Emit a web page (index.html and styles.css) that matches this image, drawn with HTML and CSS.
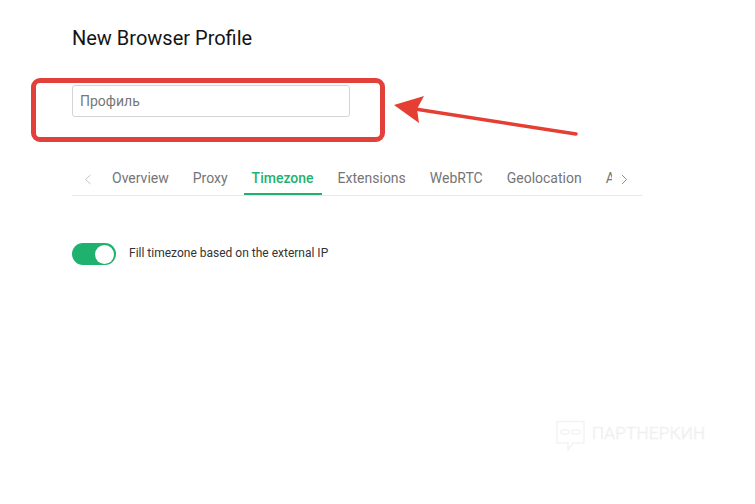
FILE: index.html
```html
<!DOCTYPE html>
<html lang="en">
<head>
<meta charset="utf-8">
<title>New Browser Profile</title>
<link rel="stylesheet" href="styles.css">
</head>
<body>
<main class="page">
  <h1 class="title">New Browser Profile</h1>
  <input class="name-input" type="text" placeholder="Профиль">
  <nav class="tabs">
    <svg class="chev" width="32" height="14" viewBox="0 0 32 14"><path d="M18.500 3 L13.500 7.500 L18.500 12" fill="none" stroke="#c4c4c4" stroke-width="1"/></svg>
    <div class="tab-view">
      <span class="tab">Overview</span>
      <span class="tab">Proxy</span>
      <span class="tab active">Timezone</span>
      <span class="tab">Extensions</span>
      <span class="tab">WebRTC</span>
      <span class="tab">Geolocation</span>
      <span class="tab">Advanced</span>
    </div>
    <svg class="chev" width="30" height="14" viewBox="0 0 30 14"><path d="M10 3 L14.500 7.500 L10 12" fill="none" stroke="#8c8c8c" stroke-width="1"/></svg>
  </nav>
  <div class="toggle-row">
    <span class="toggle"><span class="knob"></span></span>
    <span class="toggle-label">Fill timezone based on the external IP</span>
  </div>
</main>
<div class="frame"></div>
<svg class="arrow" width="200" height="50" viewBox="390 90 200 50">
  <path d="M576 134 L415 109" fill="none" stroke="#e53e33" stroke-width="3.500" stroke-linecap="round"/>
  <path d="M394 105 L424 96 L417 109 L419 123 Z" fill="#e53e33"/>
</svg>
<div class="mark">
  <svg width="32" height="34" viewBox="0 0 32 34" fill="none" stroke="#f3f3f3" stroke-width="1.500">
    <path d="M2 1.500 H29 V23 H18 L13 30 V23 H2 Z"/>
    <rect x="6" y="10" width="8" height="4" rx="2"/>
    <rect x="17" y="10" width="8" height="4" rx="2"/>
  </svg>
  <span class="mark-text">ПАРТНЕРКИН</span>
</div>
</body>
</html>
```
FILE: styles.css
```css
* { box-sizing: border-box; }
html, body { margin: 0; height: 100%; background: #fff; overflow: hidden; }
body { font-family: Roboto, "Liberation Sans", sans-serif; position: relative; }
.page { width: 642px; padding: 27px 0 0 72px; display: flex; flex-direction: column; align-items: flex-start; }
.title { margin: 0; font-size: 20px; line-height: 23px; font-weight: 400; color: #141414; }
.name-input {
  margin-top: 35px; width: 278px; height: 32px; padding: 0 7px;
  border: 1px solid #d4d4d4; border-radius: 3px; background: #fff;
  font: 14px Roboto, sans-serif; color: #333; outline: none;
}
.name-input::placeholder { color: #777; opacity: 1; }
.tabs { margin-top: 46px; width: 100%; height: 33px; display: flex; align-items: center; border-bottom: 1px solid #e8e8e8; }
.chev { flex: none; }
.tab-view { flex: 1; min-width: 0; height: 32px; display: flex; gap: 8px; overflow: hidden; }
.tab { flex: none; height: 32px; padding: 0 8px; font-size: 14px; line-height: 30px; color: #757575; border-bottom: 2px solid transparent; }
.tab.active { color: #1fb26f; font-weight: 500; width: 78px; border-bottom-color: #1fb26f; }
.toggle-row { margin-top: 47px; display: flex; align-items: center; gap: 13px; }
.toggle { width: 44px; height: 22px; border-radius: 11px; background: #1fb26f; display: flex; justify-content: flex-end; align-items: center; padding: 1.500px 2px; }
.knob { width: 19px; height: 19px; border-radius: 50%; background: #fff; }
.toggle-label { font-size: 12px; line-height: 20px; margin-bottom: 2px; color: #333; }
.frame { position: absolute; left: 31px; top: 78px; width: 354px; height: 64px; border: 5px solid #e2403a; border-radius: 9px; }
.arrow { position: absolute; left: 390px; top: 90px; }
.mark { position: absolute; left: 555px; top: 420px; display: flex; gap: 5px; align-items: flex-start; }
.mark-text { margin-top: 3px; font-size: 17px; line-height: 20px; font-weight: 300; letter-spacing: 0.3px; color: transparent; -webkit-text-stroke: 0.7px #efefef; }
```
